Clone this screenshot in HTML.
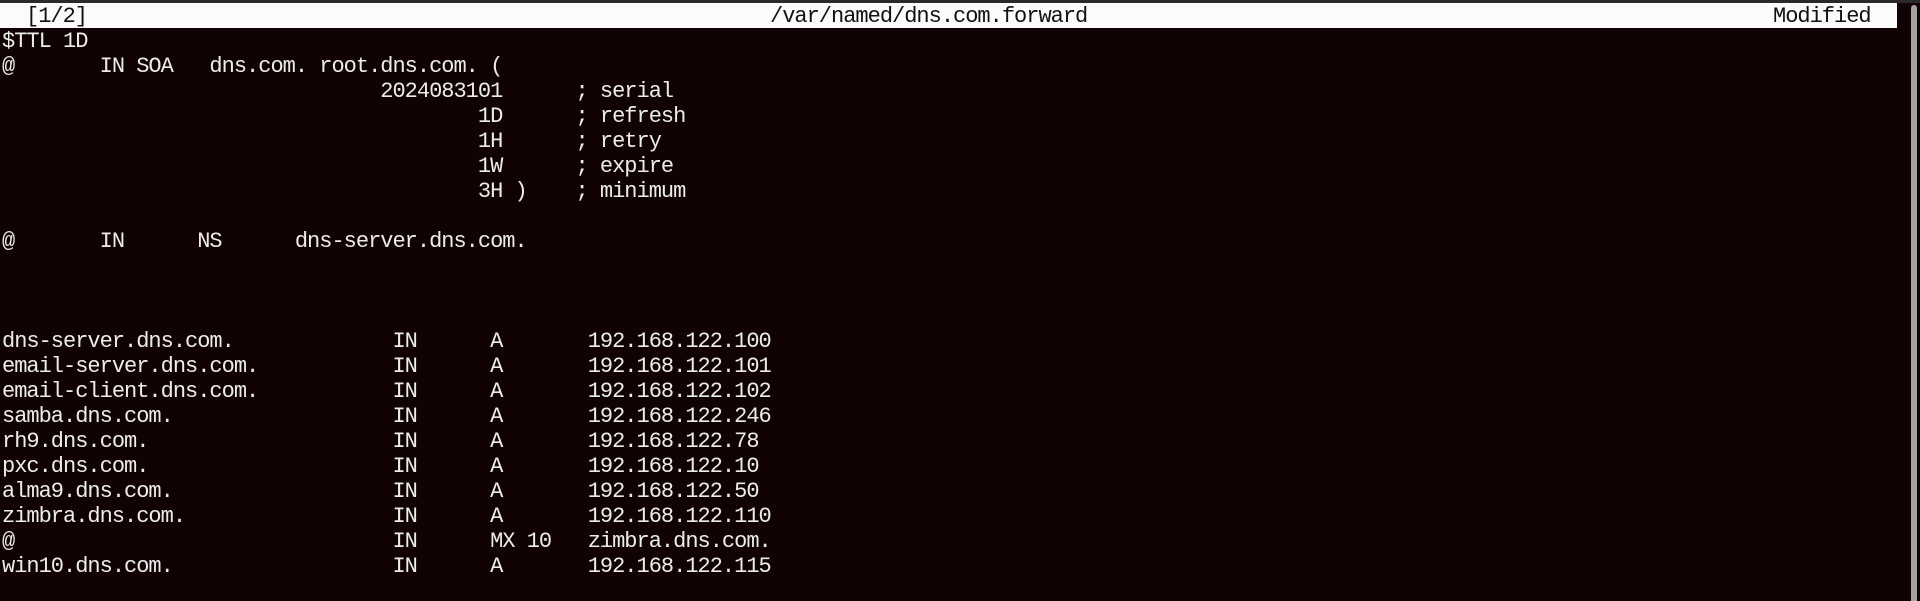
<!DOCTYPE html>
<html><head><meta charset="utf-8"><style>
html,body{margin:0;padding:0;width:1920px;height:601px;overflow:hidden;background:#110303;}
.top{position:absolute;left:0;top:0;width:1920px;height:3px;background:#2a2a2a;}
.title{position:absolute;left:0;top:3px;width:1897px;height:25px;background:#fbfbfb;}
.t{position:absolute;top:4px;height:25px;line-height:25px;font-family:"Liberation Mono",monospace;font-size:22px;letter-spacing:-1px;color:#111;white-space:pre;}
pre{position:absolute;left:2px;top:29px;margin:0;font-family:"Liberation Mono",monospace;font-size:22px;letter-spacing:-1px;line-height:25px;color:#ececec;}
.sb{position:absolute;left:1911px;top:5px;width:6px;height:596px;background:#a3a3a3;border-radius:3px 3px 0 0;}
</style></head><body>
<div class="top"></div>
<div class="title"></div>
<div class="t" style="left:26px">[1/2]</div>
<div class="t" style="left:770px">/var/named/dns.com.forward</div>
<div class="t" style="left:1773px">Modified</div>
<div class="sb"></div>
<pre>$TTL 1D
@       IN SOA   dns.com. root.dns.com. (
                               2024083101      ; serial
                                       1D      ; refresh
                                       1H      ; retry
                                       1W      ; expire
                                       3H )    ; minimum

@       IN      NS      dns-server.dns.com.



dns-server.dns.com.             IN      A       192.168.122.100
email-server.dns.com.           IN      A       192.168.122.101
email-client.dns.com.           IN      A       192.168.122.102
samba.dns.com.                  IN      A       192.168.122.246
rh9.dns.com.                    IN      A       192.168.122.78
pxc.dns.com.                    IN      A       192.168.122.10
alma9.dns.com.                  IN      A       192.168.122.50
zimbra.dns.com.                 IN      A       192.168.122.110
@                               IN      MX 10   zimbra.dns.com.
win10.dns.com.                  IN      A       192.168.122.115</pre>
</body></html>
